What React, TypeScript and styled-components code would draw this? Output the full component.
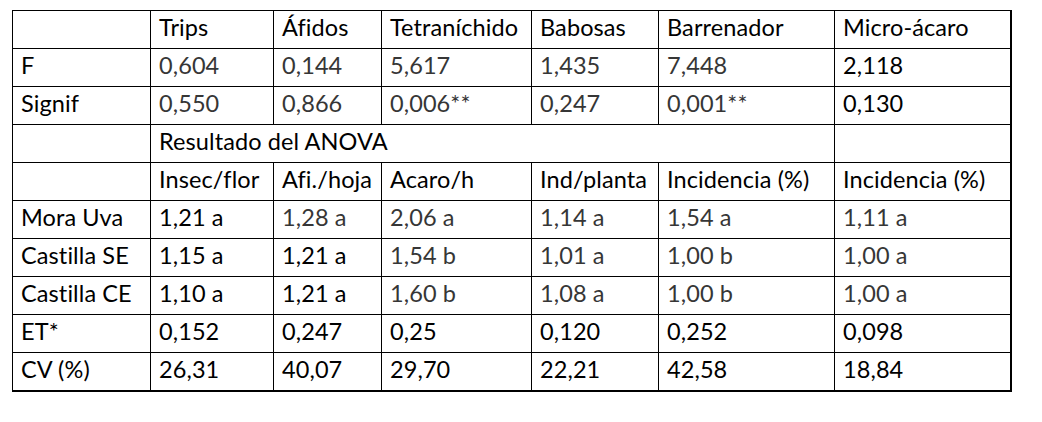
import styled, { createGlobalStyle } from 'styled-components';

const GlobalStyle = createGlobalStyle`
  body {
    margin: 0;
    background: #ffffff;
    font-family: Lato, 'Liberation Sans', sans-serif;
  }
`;

const widths = [138, 123, 108, 150, 127, 176, 176];

type Cell = { text: string; grey?: boolean; span?: number };

const g = (text: string): Cell => ({ text, grey: true });
const b = (text: string): Cell => ({ text });

const rows: Cell[][] = [
  [b(''), b('Trips'), b('Áfidos'), b('Tetraníchido'), b('Babosas'), b('Barrenador'), b('Micro-ácaro')],
  [b('F'), g('0,604'), g('0,144'), g('5,617'), g('1,435'), g('7,448'), b('2,118')],
  [b('Signif'), g('0,550'), g('0,866'), g('0,006**'), g('0,247'), g('0,001**'), b('0,130')],
  [b(''), { text: 'Resultado del ANOVA', span: 5 }, b('')],
  [b(''), b('Insec/flor'), b('Afi./hoja'), b('Acaro/h'), b('Ind/planta'), b('Incidencia (%)'), b('Incidencia (%)')],
  [b('Mora Uva'), b('1,21 a'), g('1,28 a'), g('2,06 a'), g('1,14 a'), g('1,54 a'), g('1,11 a')],
  [b('Castilla SE'), b('1,15 a'), b('1,21 a'), g('1,54 b'), g('1,01 a'), g('1,00 b'), g('1,00 a')],
  [b('Castilla CE'), b('1,10 a'), b('1,21 a'), g('1,60 b'), g('1,08 a'), g('1,00 b'), g('1,00 a')],
  [b('ET*'), b('0,152'), b('0,247'), b('0,25'), b('0,120'), b('0,252'), b('0,098')],
  [b('CV (%)'), b('26,31'), b('40,07'), b('29,70'), b('22,21'), b('42,58'), b('18,84')],
];

const Page = styled.div`
  padding: 10px 0 0 12px;
`;

const Table = styled.table`
  border-collapse: collapse;
  table-layout: fixed;
  border-right: 2px solid #000;
  border-bottom: 2px solid #000;
`;

const Row = styled.tr`
  height: 38px;
`;

const Td = styled.td<{ $grey?: boolean }>`
  border: 1px solid #000;
  padding: 0 2px 5px 8px;
  font-size: 23.5px;
  line-height: 26px;
  letter-spacing: 0.1px;
  color: ${(p) => (p.$grey ? '#363636' : '#000000')};
  white-space: nowrap;
  overflow: hidden;
  vertical-align: middle;
`;

export default function App() {
  return (
    <>
      <GlobalStyle />
      <Page>
        <Table>
          <colgroup>
            {widths.map((w, i) => (
              <col key={i} style={{ width: w }} />
            ))}
          </colgroup>
          <tbody>
            {rows.map((row, r) => (
              <Row key={r}>
                {row.map((c, i) => (
                  <Td key={i} colSpan={c.span} $grey={c.grey}>
                    {c.text}
                  </Td>
                ))}
              </Row>
            ))}
          </tbody>
        </Table>
      </Page>
    </>
  );
}
